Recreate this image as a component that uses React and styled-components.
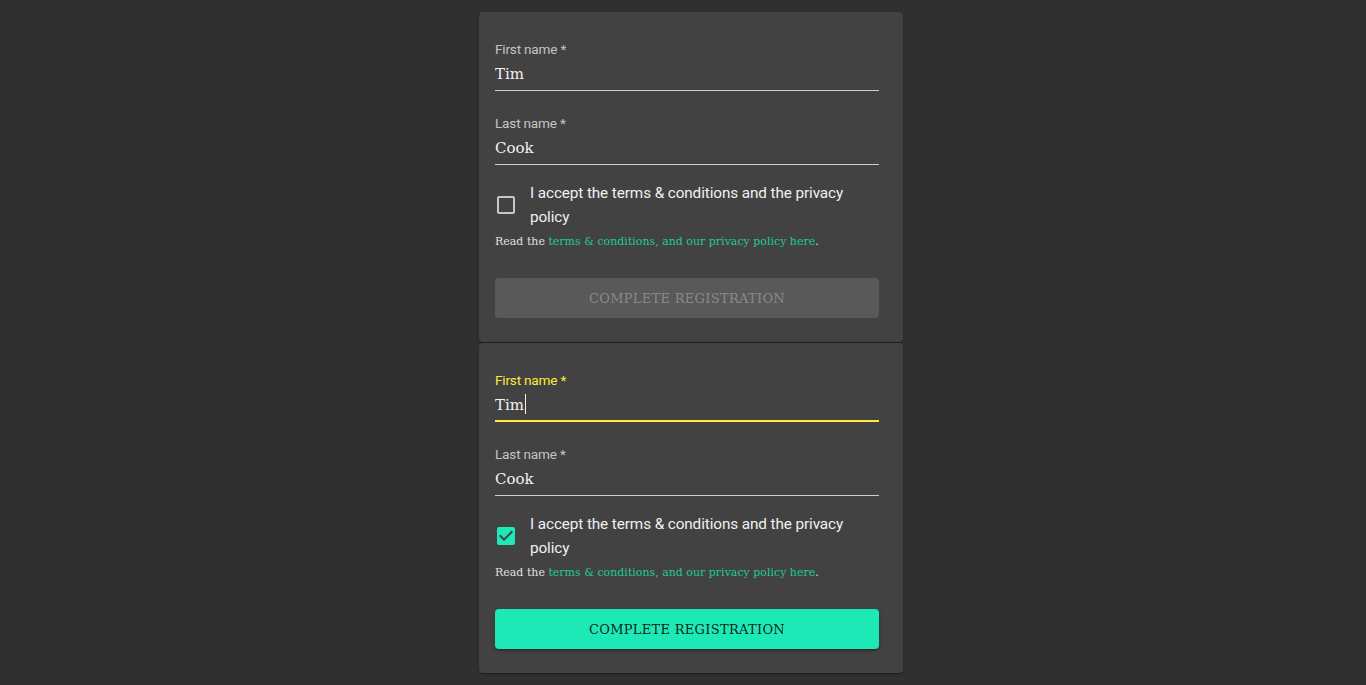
import React, { useState } from "react";
import styled, { createGlobalStyle } from "styled-components";

const GlobalStyle = createGlobalStyle`
  html, body {
    margin: 0;
    padding: 0;
    background: #303030;
  }
  body {
    font-family: "DejaVu Serif", serif;
  }
`;

const Page = styled.div`
  display: flex;
  flex-direction: column;
  align-items: center;
  padding: 12px 0 0 16px;
  min-height: 685px;
  box-sizing: border-box;
`;

const Card = styled.form`
  width: 424px;
  box-sizing: border-box;
  padding: 13px 24px 24px 16px;
  background: #424242;
  border-radius: 4px;
  box-shadow: 0 2px 1px -1px rgba(0, 0, 0, 0.2), 0 1px 1px 0 rgba(0, 0, 0, 0.14),
    0 1px 3px 0 rgba(0, 0, 0, 0.12);
  display: flex;
  flex-direction: column;
  & + & {
    margin-top: 1px;
  }
`;

const Field = styled.label`
  display: flex;
  flex-direction: column;
  margin-top: 16px;
  & + & {
    margin-top: 24px;
  }
`;

const Label = styled.span`
  font-family: Roboto, "Liberation Sans", sans-serif;
  font-size: 13.6px;
  line-height: 17px;
  letter-spacing: -0.2px;
  color: ${(p) => (p.focused ? "#ffeb3b" : "rgba(255,255,255,0.7)")};
`;

const InputWrap = styled.div`
  position: relative;
  display: flex;
  flex-direction: column;
`;

const Input = styled.input`
  font-family: "DejaVu Serif", serif;
  font-size: 15px;
  line-height: 24px;
  height: 24px;
  padding: 4px 0 ${(p) => (p.focused ? "3px" : "4px")};
  margin: 0;
  border: none;
  border-bottom: ${(p) => (p.focused ? "2px solid #ffeb3b" : "1px solid rgba(255,255,255,0.75)")};
  background: transparent;
  color: #f2f2f2;
  outline: none;
  caret-color: transparent;
`;

const Mirror = styled.span`
  position: absolute;
  left: 0;
  top: 4px;
  font-family: "DejaVu Serif", serif;
  font-size: 15px;
  line-height: 24px;
  white-space: pre;
  pointer-events: none;
  color: transparent;
`;

const Caret = styled.span`
  display: inline-block;
  width: 1px;
  height: 20px;
  margin-left: 1px;
  vertical-align: -4px;
  background: #f2f2f2;
`;

const CheckRow = styled.label`
  display: flex;
  align-items: center;
  margin-top: 16px;
  cursor: pointer;
`;

const Box = styled.span`
  flex: none;
  width: 24px;
  height: 24px;
  margin-left: -1px;
  margin-right: 12px;
  color: ${(p) => (p.checked ? "#1de9b6" : "rgba(255,255,255,0.7)")};
  svg {
    display: block;
  }
`;

const CheckText = styled.span`
  max-width: 340px;
  font-family: Roboto, "Liberation Sans", sans-serif;
  font-size: 15.3px;
  line-height: 24px;
  letter-spacing: -0.1px;
  color: #f0f0f0;
`;

const Hint = styled.p`
  margin: 5px 0 0;
  font-family: "DejaVu Serif", serif;
  font-size: 11px;
  line-height: 16px;
  color: #e0e0e0;
  a {
    color: #1ec99c;
    text-decoration: none;
  }
`;

const Submit = styled.button`
  margin-top: 28px;
  height: 40px;
  border: none;
  border-radius: 4px;
  font-family: "DejaVu Serif", serif;
  font-size: 13px;
  letter-spacing: 0.3px;
  text-transform: uppercase;
  cursor: ${(p) => (p.disabled ? "default" : "pointer")};
  background: ${(p) => (p.disabled ? "rgba(255,255,255,0.12)" : "#1de9b6")};
  color: ${(p) => (p.disabled ? "rgba(255,255,255,0.3)" : "rgba(0,0,0,0.87)")};
  box-shadow: ${(p) =>
    p.disabled
      ? "none"
      : "0 3px 1px -2px rgba(0,0,0,0.2), 0 2px 2px 0 rgba(0,0,0,0.14), 0 1px 5px 0 rgba(0,0,0,0.12)"};
`;

function CheckIcon({ checked }) {
  return (
    <svg width="24" height="24" viewBox="0 0 24 24" fill="currentColor">
      {checked ? (
        <path d="M19 3H5c-1.11 0-2 .9-2 2v14c0 1.1.89 2 2 2h14c1.11 0 2-.9 2-2V5c0-1.1-.89-2-2-2zm-9 14l-5-5 1.41-1.41L10 14.17l7.59-7.59L19 8l-9 9z" />
      ) : (
        <path d="M19 5v14H5V5h14m0-2H5c-1.1 0-2 .9-2 2v14c0 1.1.9 2 2 2h14c1.1 0 2-.9 2-2V5c0-1.1-.9-2-2-2z" />
      )}
    </svg>
  );
}

function TextField({ label, value, onChange, focused }) {
  return (
    <Field>
      <Label focused={focused}>{label}</Label>
      <InputWrap>
        <Input focused={focused} value={value} onChange={onChange} />
        {focused && (
          <Mirror>
            {value}
            <Caret />
          </Mirror>
        )}
      </InputWrap>
    </Field>
  );
}

function RegistrationForm({ focused, initialChecked }) {
  const [first, setFirst] = useState("Tim");
  const [last, setLast] = useState("Cook");
  const [checked, setChecked] = useState(initialChecked);

  return (
    <Card onSubmit={(e) => e.preventDefault()}>
      <TextField
        label="First name *"
        focused={focused}
        value={first}
        onChange={(e) => setFirst(e.target.value)}
      />
      <TextField label="Last name *" value={last} onChange={(e) => setLast(e.target.value)} />
      <CheckRow
        onClick={(e) => {
          e.preventDefault();
          setChecked(!checked);
        }}
      >
        <Box checked={checked}>
          <CheckIcon checked={checked} />
        </Box>
        <CheckText>I accept the terms &amp; conditions and the privacy policy</CheckText>
      </CheckRow>
      <Hint>
        Read the <a href="#terms">terms &amp; conditions, and our privacy policy here</a>.
      </Hint>
      <Submit type="submit" disabled={!checked}>
        Complete registration
      </Submit>
    </Card>
  );
}

export default function App() {
  return (
    <>
      <GlobalStyle />
      <Page>
        <RegistrationForm initialChecked={false} />
        <RegistrationForm focused initialChecked={true} />
      </Page>
    </>
  );
}
